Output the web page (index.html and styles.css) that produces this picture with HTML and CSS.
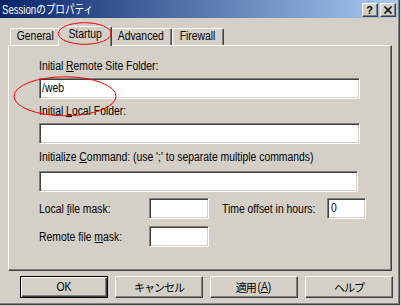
FILE: index.html
```html
<!DOCTYPE html>
<html lang="ja">
<head>
<meta charset="utf-8">
<title>Sessionのプロパティ</title>
<link rel="stylesheet" href="styles.css">
</head>
<body>
<div class="window">
  <div class="titlebar">
    <span class="title">Session<span class="jp">のプロパティ</span></span>
    <div class="caption-btns">
      <div class="cbtn help">?</div>
      <div class="cbtn close">
        <svg width="14" height="12" viewBox="0 0 14 12"><path d="M3.5 2.5 L10.5 9.5 M10.5 2.5 L3.5 9.5" stroke="#000" stroke-width="1.6" fill="none"/></svg>
      </div>
    </div>
  </div>

  <div class="tabs">
    <div class="tab t-general"><span class="nt">General</span></div>
    <div class="tab t-startup active"><span class="nt">Startup</span></div>
    <div class="tab t-advanced"><span class="nt">Advanced</span></div>
    <div class="tab t-firewall"><span class="nt">Firewall</span></div>
  </div>

  <div class="panel">
    <div class="label l1">Initial <u>R</u>emote Site Folder:</div>
    <div class="field f1"><span class="val">/web</span></div>
    <div class="label l2">Initial <u>L</u>ocal Folder:</div>
    <div class="field f2"></div>
    <div class="label l3">Initialize <u>C</u>ommand: (use ';' to separate multiple commands)</div>
    <div class="field f3"></div>
    <div class="row r4">
      <span class="label lab1">Local <u>f</u>ile mask:</span>
      <div class="field small"></div>
      <span class="label lab2">Time offset in hours:</span>
      <div class="field tiny"><span class="val">0</span></div>
    </div>
    <div class="row r5">
      <span class="label lab1">Remote file <u>m</u>ask:</span>
      <div class="field small"></div>
    </div>
  </div>

  <div class="buttons">
    <div class="btn default"><span class="nt">OK</span></div>
    <div class="btn"><span class="jp">キャンセル</span></div>
    <div class="btn"><span class="jp">適用</span><span class="nt">(<u>A</u>)</span></div>
    <div class="btn"><span class="jp">ヘルプ</span></div>
  </div>

  <svg class="annot" width="401" height="306" viewBox="0 0 401 306">
    <ellipse cx="84.7" cy="33.5" rx="26.4" ry="10.8" fill="none" stroke="#ff0000" stroke-width="1"/>
    <ellipse cx="65" cy="96.3" rx="51" ry="19.5" fill="none" stroke="#ff0000" stroke-width="1"/>
  </svg>
</div>
</body>
</html>
```

FILE: styles.css
```css
* { box-sizing: border-box; }

html, body {
  margin: 0;
  padding: 0;
  background: #d4d0c8;
}

body {
  width: 401px;
  height: 306px;
  overflow: hidden;
  font-family: "Liberation Sans", "Noto Sans CJK JP", sans-serif;
  font-size: 12.5px;
  color: #000;
}

u { text-decoration: underline; text-underline-offset: 1px; }

/* narrow UI font look (MS UI Gothic is condensed) */
.nt, .val {
  display: inline-block;
  transform: scaleX(0.83);
}

.val { transform-origin: left center; }

.jp {
  font-family: "Noto Sans CJK JP", sans-serif;
  font-size: 11px;
  letter-spacing: -1px;
}

.window {
  position: relative;
  width: 400px;
  height: 305px;
  padding-right: 1px;
  padding-bottom: 1px;
  border-right: 1px solid #404040;
  border-bottom: 1px solid #404040;
  box-shadow: inset -1px -1px #808080;
  background: #d4d0c8;
}

.titlebar {
  height: 18px;
  display: flex;
  align-items: center;
  padding-left: 2px;
  background: linear-gradient(to right, #0a246a, #a6caf0);
}

.title {
  display: inline-block;
  color: #fff;
  font-size: 12px;
  line-height: 18px;
  white-space: nowrap;
  transform: scaleX(0.8);
  transform-origin: left center;
}

.title .jp { font-size: 12px; letter-spacing: 0; }

.caption-btns {
  margin-left: auto;
  margin-right: 2px;
  align-self: flex-start;
  margin-top: 3px;
  display: flex;
  gap: 2px;
}

.cbtn {
  width: 16px;
  height: 14px;
  background: #d4d0c8;
  border: 1px solid;
  border-color: #fff #404040 #404040 #fff;
  box-shadow: inset -1px -1px #808080;
  display: flex;
  align-items: center;
  justify-content: center;
}

.cbtn.help {
  font-family: "Liberation Sans", sans-serif;
  font-weight: bold;
  font-size: 11px;
  line-height: 12px;
  padding-right: 1px;
}

.tabs {
  display: flex;
  align-items: flex-end;
  height: 19px;
  margin-top: 8px;
  padding-left: 10px;
}

.tab {
  height: 17px;
  line-height: 14px;
  text-align: center;
  white-space: nowrap;
  background: #d4d0c8;
  border-left: 1px solid #fff;
  border-top: 1px solid #fff;
  border-right: 1px solid #404040;
  box-shadow: inset -1px 0 #808080;
  border-top-left-radius: 2px;
  border-top-right-radius: 2px;
}

.t-general { width: 50px; }
.t-startup { width: 50px; }
.t-advanced { width: 62px; }
.t-firewall { width: 52px; }

.tab.active {
  position: relative;
  z-index: 2;
  width: 54px;
  height: 20px;
  margin: 0 -2px -1px -2px;
}

.panel {
  margin-left: 8px;
  width: 384px;
  height: 226px;
  border: 1px solid;
  border-color: #fff #404040 #404040 #fff;
  box-shadow: inset -1px -1px #808080;
  padding: 13px 0 0 30px;
}

.label {
  display: block;
  height: 14px;
  line-height: 14px;
  white-space: nowrap;
  transform: scaleX(0.83);
  transform-origin: left center;
}

.field {
  height: 21px;
  background: #fff;
  border: 1px solid;
  border-color: #808080 #fff #fff #808080;
  box-shadow: inset 1px 1px #404040, inset -1px -1px #d4d0c8;
  padding: 2px 0 0 2px;
  line-height: 14px;
}

.f1 { width: 321px; margin-top: 5px; }
.l2 { margin-top: 5px; }
.f2 { width: 321px; margin-top: 5px; }
.l3 { margin-top: 6px; }
.f3 { width: 319px; margin-top: 7px; }

.row {
  display: flex;
  align-items: center;
  height: 21px;
}

.r4 { margin-top: 6px; }
.r5 { margin-top: 7px; }

.lab1 { width: 110px; flex: none; }
.lab2 { width: 105px; flex: none; margin-left: 13px; }
.field.small { width: 60px; }
.field.tiny { width: 39px; padding-left: 3px; }

.buttons {
  display: flex;
  gap: 7px;
  margin-top: 5px;
  padding-left: 20px;
}

.btn {
  width: 88px;
  height: 22px;
  display: flex;
  align-items: center;
  justify-content: center;
  white-space: nowrap;
  border: 1px solid;
  border-color: #fff #404040 #404040 #fff;
  box-shadow: inset -1px -1px #808080;
  line-height: 14px;
}

.btn.default {
  border-color: #000;
  box-shadow: inset 1px 1px #fff, inset -1px -1px #404040, inset -2px -2px #808080;
}

.annot {
  position: absolute;
  left: 0;
  top: 0;
  z-index: 5;
  pointer-events: none;
}
```
